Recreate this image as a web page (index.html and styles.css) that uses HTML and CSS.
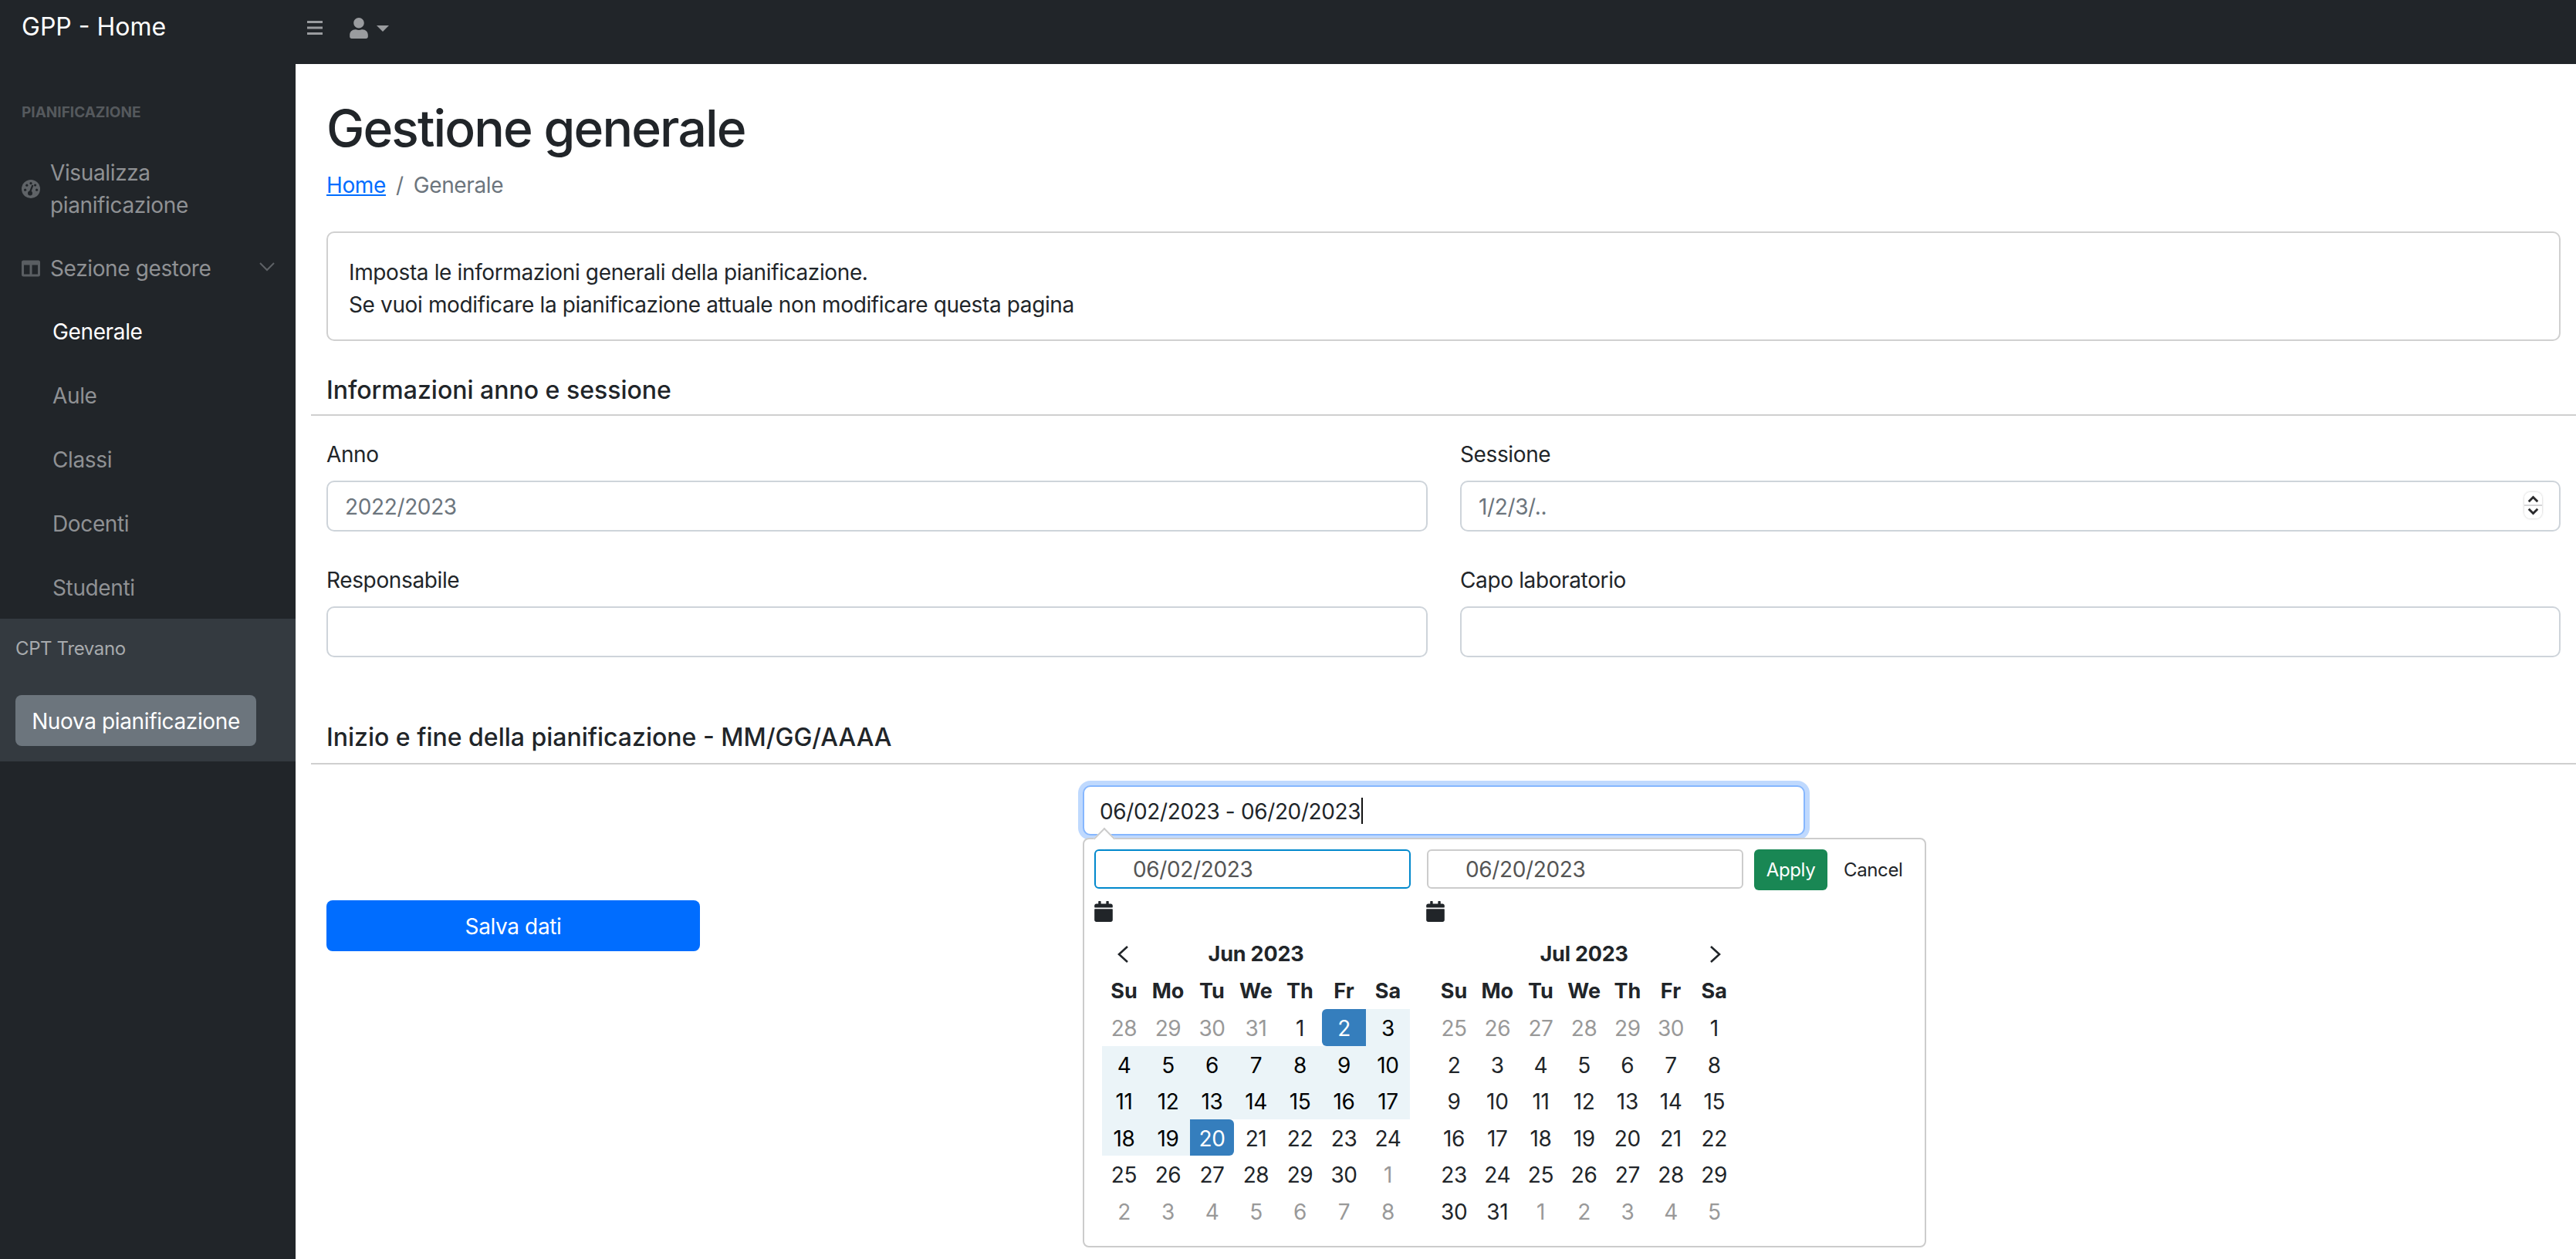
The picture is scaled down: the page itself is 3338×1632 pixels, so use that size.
FILE: index.html
```html
<!DOCTYPE html>
<html lang="it">
<head>
<meta charset="utf-8">
<title>GPP - Home</title>
<link rel="stylesheet" href="styles.css">
</head>
<body>
<nav class="topbar">
  <a class="brand">GPP - Home</a>
  <svg class="ic-bars" viewBox="0 0 20 18"><path d="M0 0h20v3H0zM0 7.5h20v3H0zM0 15h20v3H0z"/></svg>
  <svg class="ic-user" viewBox="0 0 448 512"><path d="M224 256c70.7 0 128-57.3 128-128S294.7 0 224 0 96 57.3 96 128s57.3 128 128 128zm89.6 32h-16.7c-22.2 10.2-46.9 16-72.9 16s-50.6-5.8-72.9-16h-16.7C60.2 288 0 348.2 0 422.4V464c0 26.5 21.5 48 48 48h352c26.5 0 48-21.5 48-48v-41.6c0-74.2-60.2-134.4-134.4-134.4z"/></svg>
  <span class="caret-down"></span>
</nav>
<div class="layout">
  <aside class="sidebar">
    <div class="side-nav">
      <div class="side-heading">PIANIFICAZIONE</div>
      <a class="side-link two-line">
        <svg class="side-ic gauge" viewBox="0 0 24 24">
          <circle cx="12" cy="12" r="12" fill="#5f6367"/>
          <g fill="#212529">
            <circle cx="4.6" cy="13.2" r="1.6"/>
            <circle cx="6.8" cy="7.2" r="1.6"/>
            <circle cx="12" cy="4.6" r="1.6"/>
            <circle cx="17.6" cy="7" r="1.6"/>
            <circle cx="19.6" cy="13.2" r="1.6"/>
            <circle cx="11" cy="17.4" r="3"/>
          </g>
          <path d="M10.6 17L14.4 7" stroke="#212529" stroke-width="2.2"/>
        </svg>
        <span>Visualizza<br>pianificazione</span>
      </a>
      <a class="side-link">
        <svg class="side-ic" viewBox="0 0 512 512"><path d="M464 32H48C21.49 32 0 53.49 0 80v352c0 26.51 21.49 48 48 48h416c26.51 0 48-21.49 48-48V80c0-26.51-21.49-48-48-48zM224 416H64V160h160v256zm224 0H288V160h160v256z"/></svg>
        <span>Sezione gestore</span>
        <svg class="chev" viewBox="0 0 20 12"><path d="M1 1l9 9 9-9" fill="none" stroke-width="2"/></svg>
      </a>
      <a class="side-sub active">Generale</a>
      <a class="side-sub">Aule</a>
      <a class="side-sub">Classi</a>
      <a class="side-sub">Docenti</a>
      <a class="side-sub">Studenti</a>
    </div>
    <div class="side-footer">
      <div class="org">CPT Trevano</div>
      <button class="btn-new">Nuova pianificazione</button>
    </div>
  </aside>
  <main class="main">
    <h1 class="title">Gestione generale</h1>
    <ol class="crumbs">
      <li><a class="crumb-link">Home</a></li>
      <li class="crumb-sep">/</li>
      <li class="crumb-cur">Generale</li>
    </ol>
    <div class="note">
      Imposta le informazioni generali della pianificazione.<br>
      Se vuoi modificare la pianificazione attuale non modificare questa pagina
    </div>
    <h2 class="sect first">Informazioni anno e sessione</h2>
    <div class="form-grid">
      <div class="field">
        <label class="lab">Anno</label>
        <input class="inp" type="text" placeholder="2022/2023">
      </div>
      <div class="field">
        <label class="lab">Sessione</label>
        <div class="spin-wrap">
          <input class="inp" type="text" placeholder="1/2/3/..">
          <div class="spinner">
            <svg viewBox="0 0 24 34"><path d="M6 12l6-6 6 6M6 22l6 6 6-6" fill="none" stroke="#2a2a2c" stroke-width="3"/></svg>
          </div>
        </div>
      </div>
      <div class="field">
        <label class="lab">Responsabile</label>
        <input class="inp" type="text">
      </div>
      <div class="field">
        <label class="lab">Capo laboratorio</label>
        <input class="inp" type="text">
      </div>
    </div>
    <h2 class="sect second">Inizio e fine della pianificazione - MM/GG/AAAA</h2>
    <div class="range-wrap">
      <div class="range-input"><span>06/02/2023 - 06/20/2023</span><i class="text-caret"></i></div>
      <div class="picker">
        <span class="picker-arrow"></span>
        <div class="dp-top">
          <div class="dp-inp focus">06/02/2023</div>
          <div class="dp-inp">06/20/2023</div>
          <button class="btn-apply">Apply</button>
          <button class="btn-cancel">Cancel</button>
        </div>
        <div class="dp-icons">
          <svg class="cal-ic" viewBox="0 0 448 512"><path d="M12 192h424c6.6 0 12 5.4 12 12v260c0 26.5-21.5 48-48 48H48c-26.5 0-48-21.5-48-48V204c0-6.6 5.4-12 12-12zm436-44v-36c0-26.5-21.5-48-48-48h-48V12c0-6.6-5.4-12-12-12h-40c-6.6 0-12 5.4-12 12v52H160V12c0-6.6-5.4-12-12-12h-40c-6.6 0-12 5.4-12 12v52H48C21.5 64 0 85.5 0 112v36c0 6.6 5.4 12 12 12h424c6.6 0 12-5.4 12-12z"/></svg>
          <svg class="cal-ic" viewBox="0 0 448 512"><path d="M12 192h424c6.6 0 12 5.4 12 12v260c0 26.5-21.5 48-48 48H48c-26.5 0-48-21.5-48-48V204c0-6.6 5.4-12 12-12zm436-44v-36c0-26.5-21.5-48-48-48h-48V12c0-6.6-5.4-12-12-12h-40c-6.6 0-12 5.4-12 12v52H160V12c0-6.6-5.4-12-12-12h-40c-6.6 0-12 5.4-12 12v52H48C21.5 64 0 85.5 0 112v36c0 6.6 5.4 12 12 12h424c6.6 0 12-5.4 12-12z"/></svg>
        </div>
        <div class="dp-cals">
          <div class="cal left">
            <div class="cal-grid">
              <div class="nav"><svg viewBox="0 0 16 24"><path d="M14 2L3 12l11 10" fill="none" stroke="#212529" stroke-width="2.6"/></svg></div>
              <div class="month">Jun 2023</div>
              <div class="nav"></div>
              <div class="wd">Su</div><div class="wd">Mo</div><div class="wd">Tu</div><div class="wd">We</div><div class="wd">Th</div><div class="wd">Fr</div><div class="wd">Sa</div>
              <div class="off">28</div><div class="off">29</div><div class="off">30</div><div class="off">31</div><div class="d">1</div><div class="start">2</div><div class="rng">3</div>
              <div class="rng">4</div><div class="rng">5</div><div class="rng">6</div><div class="rng">7</div><div class="rng">8</div><div class="rng">9</div><div class="rng">10</div>
              <div class="rng">11</div><div class="rng">12</div><div class="rng">13</div><div class="rng">14</div><div class="rng">15</div><div class="rng">16</div><div class="rng">17</div>
              <div class="rng">18</div><div class="rng">19</div><div class="end">20</div><div class="d">21</div><div class="d">22</div><div class="d">23</div><div class="d">24</div>
              <div class="d">25</div><div class="d">26</div><div class="d">27</div><div class="d">28</div><div class="d">29</div><div class="d">30</div><div class="off">1</div>
              <div class="off">2</div><div class="off">3</div><div class="off">4</div><div class="off">5</div><div class="off">6</div><div class="off">7</div><div class="off">8</div>
            </div>
          </div>
          <div class="cal right">
            <div class="cal-grid">
              <div class="nav"></div>
              <div class="month">Jul 2023</div>
              <div class="nav"><svg viewBox="0 0 16 24"><path d="M2 2l11 10L2 22" fill="none" stroke="#212529" stroke-width="2.6"/></svg></div>
              <div class="wd">Su</div><div class="wd">Mo</div><div class="wd">Tu</div><div class="wd">We</div><div class="wd">Th</div><div class="wd">Fr</div><div class="wd">Sa</div>
              <div class="off">25</div><div class="off">26</div><div class="off">27</div><div class="off">28</div><div class="off">29</div><div class="off">30</div><div class="d">1</div>
              <div class="d">2</div><div class="d">3</div><div class="d">4</div><div class="d">5</div><div class="d">6</div><div class="d">7</div><div class="d">8</div>
              <div class="d">9</div><div class="d">10</div><div class="d">11</div><div class="d">12</div><div class="d">13</div><div class="d">14</div><div class="d">15</div>
              <div class="d">16</div><div class="d">17</div><div class="d">18</div><div class="d">19</div><div class="d">20</div><div class="d">21</div><div class="d">22</div>
              <div class="d">23</div><div class="d">24</div><div class="d">25</div><div class="d">26</div><div class="d">27</div><div class="d">28</div><div class="d">29</div>
              <div class="d">30</div><div class="d">31</div><div class="off">1</div><div class="off">2</div><div class="off">3</div><div class="off">4</div><div class="off">5</div>
            </div>
          </div>
        </div>
      </div>
    </div>
    <button class="btn-save">Salva dati</button>
  </main>
</div>
</body>
</html>
```
FILE: styles.css
```css
* { box-sizing: border-box; }
html, body { margin: 0; padding: 0; }
body {
  width: 3338px;
  height: 1632px;
  overflow: hidden;
  background: #fff;
  color: #212529;
  font-family: Inter, "Liberation Sans", sans-serif;
  font-size: 28px;
  line-height: 42px;
  letter-spacing: -0.37px;
}
input, button { letter-spacing: -0.37px; }
.topbar {
  height: 83px;
  background: #212529;
  display: flex;
  align-items: center;
  padding-left: 28px;
  padding-bottom: 13px;
}
.brand { color: #fff; font-size: 32px; width: 370px; letter-spacing: 0; }
.ic-bars { width: 20px; height: 18px; fill: #9a9c9f; margin-top: 2px; }
.ic-user { width: 24px; height: 27px; fill: #9a9c9f; margin-left: 35px; margin-top: 2px; }
.caret-down {
  width: 0; height: 0;
  margin-left: 11px;
  margin-top: 4px;
  border-left: 8px solid transparent;
  border-right: 8px solid transparent;
  border-top: 8px solid #9a9c9f;
}
.layout { display: flex; height: 1549px; }
.sidebar { width: 383px; flex: none; background: #212529; }
.side-nav { padding-top: 49px; }
.side-heading {
  font-size: 19px;
  font-weight: 700;
  line-height: 28px;
  color: #55595d;
  padding-left: 28px;
  margin-bottom: 43px;
  letter-spacing: 0;
}
.side-link {
  display: flex;
  align-items: center;
  padding-left: 28px;
  color: #8f9194;
  line-height: 42px;
}
.side-link.two-line { margin-bottom: 40px; }
.side-link span { margin-left: 13px; }
.side-ic { width: 24px; height: 24px; fill: #5a5e62; flex: none; }
.chev { width: 20px; height: 12px; stroke: #5e6266; margin-left: 63px; margin-top: -4px; }
.side-sub {
  display: block;
  color: #8f9194;
  padding-left: 68px;
  height: 83px;
  line-height: 83px;
}
.side-sub.active { color: #fff; margin-top: 20px; }
.side-footer {
  background: #343a40;
  height: 185px;
  margin-top: -2px;
  padding: 18px 20px 0;
}
.org { font-size: 24px; color: #a7aaad; line-height: 42px; margin-bottom: 39px; }
.btn-new {
  display: block;
  width: 312px;
  height: 66px;
  border: 0;
  border-radius: 8px;
  background: #6c757d;
  color: #fff;
  font: 28px Inter, sans-serif;
  padding: 2px 0 0;
}
.main { flex: 1; padding: 0 20px 0 20px; }
.title {
  margin: 44px 0 0;
  padding-left: 20px;
  font-size: 66px;
  font-weight: 500;
  line-height: 78px;
  letter-spacing: -1.9px;
}
.crumbs {
  list-style: none;
  margin: 14px 0 0;
  padding: 0 0 0 20px;
  display: flex;
  gap: 13px;
  line-height: 42px;
}
.crumb-link { color: #006dff; text-decoration: underline; }
.crumb-sep, .crumb-cur { color: #6c757d; }
.note {
  margin: 39px 0 0 20px;
  width: 2895px;
  height: 142px;
  border: 2px solid #d0d0d0;
  border-radius: 10px;
  padding: 30px 27px 0;
  line-height: 42px;
}
.sect {
  margin: 0 -20px 0 0;
  font-size: 32px;
  font-weight: 500;
  line-height: 42px;
  padding: 0 0 10px 20px;
  border-bottom: 2px solid #cfcfcf;
  letter-spacing: 0;
}
.sect.first { margin-top: 43px; }
.sect.second { margin-top: 83px; padding-bottom: 12px; }
.form-grid {
  display: grid;
  grid-template-columns: 1427px 1426px;
  column-gap: 42px;
  row-gap: 42px;
  padding: 29px 0 0 20px;
}
.lab { display: block; line-height: 42px; margin-bottom: 13px; }
.inp {
  display: block;
  width: 100%;
  height: 66px;
  border: 2px solid #ced4da;
  border-radius: 10px;
  padding: 2px 22px 0;
  font: 28px Inter, sans-serif;
  color: #212529;
  background: #fff;
  outline: none;
}
.inp::placeholder { color: #6c757d; opacity: 1; }
.spin-wrap { position: relative; }
.spinner {
  position: absolute;
  right: 24px;
  top: 15px;
  width: 23px;
  height: 34px;
  border-radius: 8px;
  background: linear-gradient(#fff 48%, #d4d4d6 48%, #d4d4d6 52%, #fff 52%);
  box-shadow: 0 0 3px rgba(0,0,0,.25);
}
.spinner svg { display: block; width: 23px; height: 34px; }
.range-wrap {
  position: relative;
  width: 936px;
  margin: 27px 0 0 1000px;
}
.range-input {
  height: 65px;
  border: 2px solid #86b7fe;
  border-radius: 10px;
  box-shadow: 0 0 0 6px #bfd9fe;
  padding: 2px 20px 0;
  display: flex;
  align-items: center;
  background: #fff;
}
.text-caret { width: 2px; height: 34px; background: #111; margin-left: 1px; margin-top: -2px; }
.picker {
  position: absolute;
  left: 0;
  top: 68px;
  width: 1093px;
  height: 531px;
  background: #fff;
  border: 2px solid #ccc;
  border-radius: 8px;
  padding: 13px 13px 0;
  z-index: 5;
}
.picker-arrow {
  position: absolute;
  left: 16px;
  top: -11px;
  width: 20px;
  height: 20px;
  background: #fff;
  border-left: 2px solid #ccc;
  border-top: 2px solid #ccc;
  transform: rotate(45deg);
}
.dp-top { display: flex; align-items: flex-start; }
.dp-inp {
  width: 410px;
  height: 51px;
  border: 2px solid #ccc;
  border-radius: 6px;
  color: #555;
  padding-left: 48px;
  line-height: 49px;
  margin-right: 21px;
}
.dp-inp.focus { border-color: #08c; }
.btn-apply {
  width: 95px;
  height: 53px;
  margin-left: -7px;
  border: 0;
  border-radius: 6px;
  background: #198754;
  color: #fff;
  font: 24px Inter, sans-serif;
  padding: 0;
}
.btn-cancel {
  height: 53px;
  margin-left: 21px;
  border: 0;
  background: none;
  color: #212529;
  font: 24px Inter, sans-serif;
  padding: 0;
}
.dp-icons { display: flex; gap: 406px; margin-top: 14px; height: 27px; }
.cal-ic { width: 24px; height: 27px; fill: #212529; display: block; }
.dp-cals { display: flex; margin-top: 18px; margin-left: 10px; }
.cal.left { width: 428px; }
.cal.left .cal-grid { grid-template-columns: repeat(7, 57px); }
.cal.right .cal-grid { grid-template-columns: repeat(7, 56.2px); }
.cal-grid {
  display: grid;
  grid-auto-rows: 47.5px;
  text-align: center;
  line-height: 47.5px;
}
.nav { display: flex; align-items: center; justify-content: center; }
.nav svg { width: 16px; height: 24px; }
.cal.left .nav svg { margin-right: 4px; }
.cal.right .nav svg { margin-left: 4px; }
.month { grid-column: span 5; font-weight: 700; font-size: 27px; letter-spacing: -0.2px; }
.wd { font-weight: 700; font-size: 27px; letter-spacing: 0; }
.d, .off, .rng, .start, .end { padding-top: 2px; }
.d { color: #212529; }
.off { color: #999; }
.rng { background: #ebf4f8; color: #000; }
.start, .end { background: #357ebd; color: #fff; }
.start { border-radius: 6px 0 0 6px; }
.end { border-radius: 0 6px 6px 0; }
.btn-save {
  display: block;
  width: 484px;
  height: 66px;
  margin: 84px 0 0 20px;
  border: 0;
  border-radius: 8px;
  background: #006dff;
  color: #fff;
  font: 28px Inter, sans-serif;
  padding: 2px 0 0;
}
```
